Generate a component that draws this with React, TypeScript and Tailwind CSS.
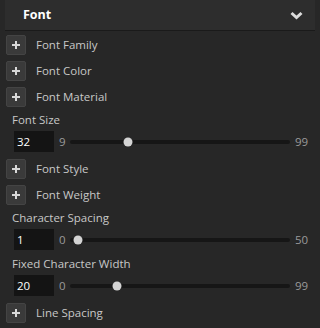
import React from "react";

const font = { fontFamily: '"Open Sans", "Noto Sans", sans-serif' };

function PlusRow({ label }: { label: string }) {
  return (
    <div className="flex h-[26px] items-center">
      <div className="ml-[6px] flex h-[20px] w-[20px] items-center justify-center rounded-[2px] border border-[#444] bg-[#3a3a3a]">
        <svg width="10" height="10" viewBox="0 0 10 10">
          <path d="M5 1v8M1 5h8" stroke="#d8d8d8" strokeWidth="2" />
        </svg>
      </div>
      <span className="ml-[10px] text-[11.5px] text-[#c8c8c8]">{label}</span>
    </div>
  );
}

function SliderGroup({ label, value, min, max }: { label: string; value: number; min: number; max: number }) {
  const pct = (value - min) / (max - min);
  return (
    <div className="flex h-[46px] flex-col">
      <div className="flex h-[20px] items-center pl-[12px] text-[11.5px] text-[#c8c8c8]">{label}</div>
      <div className="mt-[1px] flex h-[21px] items-center">
        <div className="ml-[14px] flex h-[21px] w-[40px] items-center bg-[#141414] pl-[3px] text-[11.5px] text-white">{value}</div>
        <span className="ml-[5px] w-[11px] text-[11.5px] text-[#9a9a9a]">{min}</span>
        <div className="relative h-[4px] w-[220px] rounded-full bg-[#161616]">
          <div
            className="absolute top-1/2 h-[9px] w-[9px] -translate-x-1/2 -translate-y-1/2 rounded-full bg-[#d4d4d4]"
            style={{ left: `${4 + pct * 212}px` }}
          />
        </div>
        <span className="ml-[5px] text-[11.5px] text-[#9a9a9a]">{max}</span>
      </div>
    </div>
  );
}

export default function App() {
  return (
    <div className="h-[328px] w-[320px] overflow-hidden bg-[#272727]" style={font}>
      <div className="mx-[5px] flex h-[31px] items-center justify-between border-b border-[#1a1a1a] bg-[#2d2d2d] pl-[18px] pr-[12px]">
        <span className="text-[12.5px] font-bold text-white">Font</span>
        <svg width="13" height="9" viewBox="0 0 13 9">
          <path d="M1.5 2l5 4.5 5-4.5" stroke="#dcdcdc" strokeWidth="3" fill="none" />
        </svg>
      </div>
      <div className="h-[1px]" />
      <PlusRow label="Font Family" />
      <PlusRow label="Font Color" />
      <PlusRow label="Font Material" />
      <SliderGroup label="Font Size" value={32} min={9} max={99} />
      <PlusRow label="Font Style" />
      <PlusRow label="Font Weight" />
      <SliderGroup label="Character Spacing" value={1} min={0} max={50} />
      <SliderGroup label="Fixed Character Width" value={20} min={0} max={99} />
      <PlusRow label="Line Spacing" />
    </div>
  );
}
